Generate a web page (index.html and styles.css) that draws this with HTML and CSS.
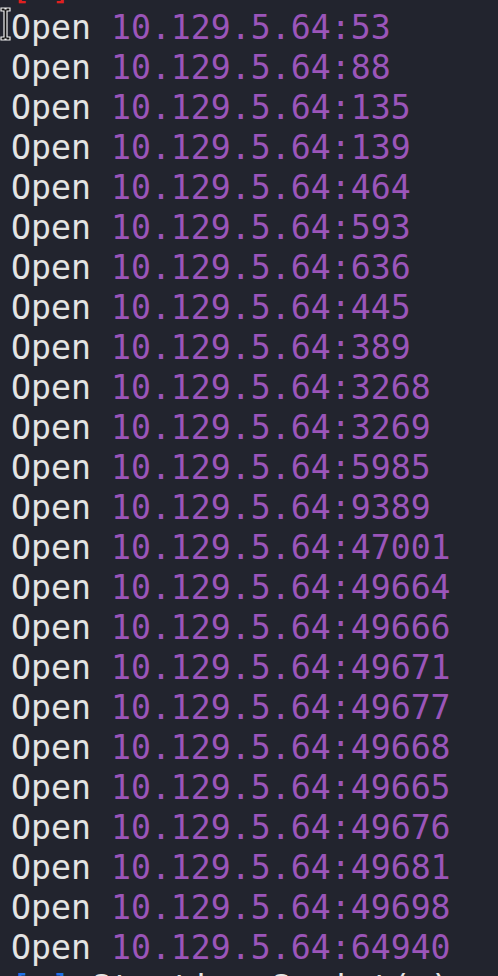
FILE: index.html
```html
<!DOCTYPE html>
<html>
<head>
<meta charset="utf-8">
<link rel="stylesheet" href="styles.css">
</head>
<body>
<div class="term">
  <div class="line"><span class="red">[-]</span></div>
  <div class="line"><span class="w">Open</span> <span class="ip">10.129.5.64:53</span></div>
  <div class="line"><span class="w">Open</span> <span class="ip">10.129.5.64:88</span></div>
  <div class="line"><span class="w">Open</span> <span class="ip">10.129.5.64:135</span></div>
  <div class="line"><span class="w">Open</span> <span class="ip">10.129.5.64:139</span></div>
  <div class="line"><span class="w">Open</span> <span class="ip">10.129.5.64:464</span></div>
  <div class="line"><span class="w">Open</span> <span class="ip">10.129.5.64:593</span></div>
  <div class="line"><span class="w">Open</span> <span class="ip">10.129.5.64:636</span></div>
  <div class="line"><span class="w">Open</span> <span class="ip">10.129.5.64:445</span></div>
  <div class="line"><span class="w">Open</span> <span class="ip">10.129.5.64:389</span></div>
  <div class="line"><span class="w">Open</span> <span class="ip">10.129.5.64:3268</span></div>
  <div class="line"><span class="w">Open</span> <span class="ip">10.129.5.64:3269</span></div>
  <div class="line"><span class="w">Open</span> <span class="ip">10.129.5.64:5985</span></div>
  <div class="line"><span class="w">Open</span> <span class="ip">10.129.5.64:9389</span></div>
  <div class="line"><span class="w">Open</span> <span class="ip">10.129.5.64:47001</span></div>
  <div class="line"><span class="w">Open</span> <span class="ip">10.129.5.64:49664</span></div>
  <div class="line"><span class="w">Open</span> <span class="ip">10.129.5.64:49666</span></div>
  <div class="line"><span class="w">Open</span> <span class="ip">10.129.5.64:49671</span></div>
  <div class="line"><span class="w">Open</span> <span class="ip">10.129.5.64:49677</span></div>
  <div class="line"><span class="w">Open</span> <span class="ip">10.129.5.64:49668</span></div>
  <div class="line"><span class="w">Open</span> <span class="ip">10.129.5.64:49665</span></div>
  <div class="line"><span class="w">Open</span> <span class="ip">10.129.5.64:49676</span></div>
  <div class="line"><span class="w">Open</span> <span class="ip">10.129.5.64:49681</span></div>
  <div class="line"><span class="w">Open</span> <span class="ip">10.129.5.64:49698</span></div>
  <div class="line"><span class="w">Open</span> <span class="ip">10.129.5.64:64940</span></div>
  <div class="line"><span class="blue">[~]</span> <span class="w">Starting Script(s)</span></div>
</div>
<svg class="cursor" width="12" height="40" viewBox="0 0 12 40">
  <path d="M1 4 H5 V5 H6 V4 H10 V7 H7 V33 H10 V36 H6 V35 H5 V36 H1 V33 H4 V7 H1 Z" fill="#111" stroke="#f0f0f0" stroke-width="1.2"/>
</svg>
</body>
</html>
```
FILE: styles.css
```css
html, body {
  margin: 0;
  padding: 0;
  background: #22242e;
  overflow: hidden;
}
body {
  width: 498px;
  height: 976px;
  position: relative;
}
.term {
  margin-top: -32px;
  padding-left: 11px;
  font-family: "DejaVu Sans Mono", monospace;
  font-size: 33.2px;
  line-height: 40px;
}
.line {
  height: 40px;
  white-space: pre;
}
.w { color: #e4e4e4; }
.ip { color: #9b55b9; }
.red { color: #e02020; }
.blue { color: #1f6fe6; }
.cursor {
  position: absolute;
  left: 0;
  top: 4px;
}
```
